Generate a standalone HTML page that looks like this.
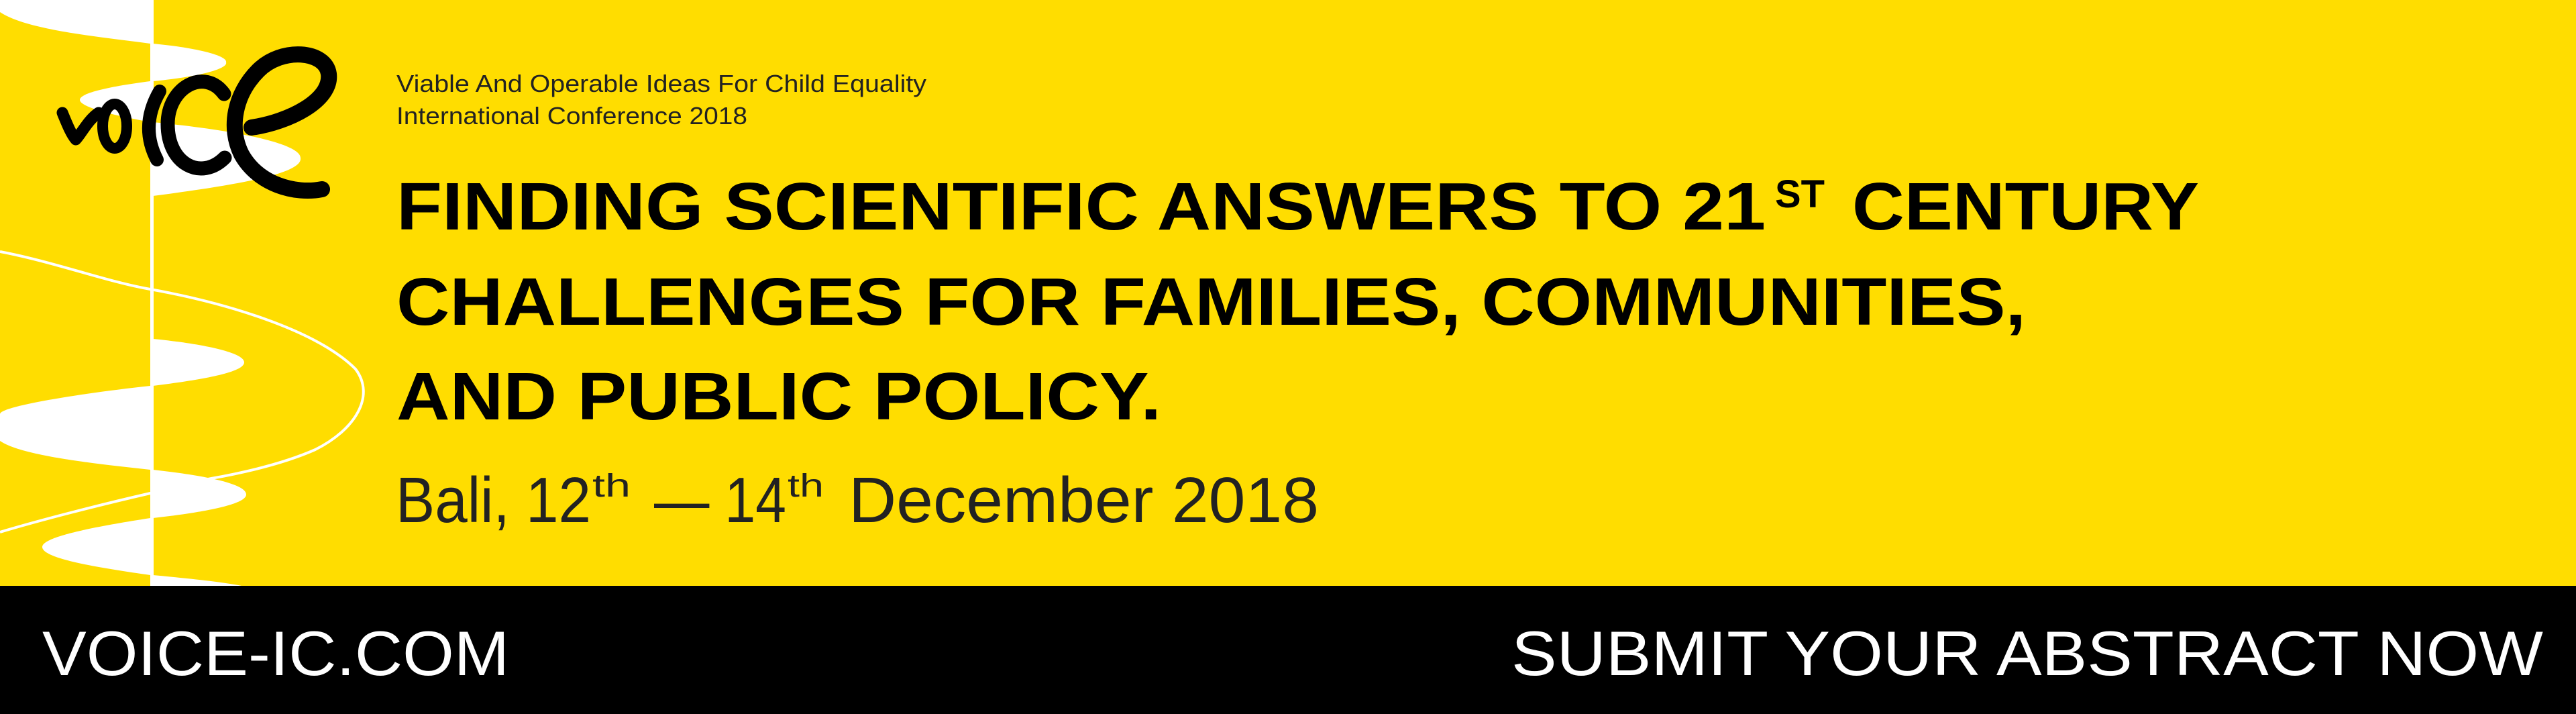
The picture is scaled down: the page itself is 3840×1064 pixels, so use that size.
<!DOCTYPE html>
<html><head><meta charset="utf-8"><style>
html,body{margin:0;padding:0;background:#FFDD00;}
svg{display:block;}
</style></head><body>
<svg width="3840" height="1064" viewBox="0 0 3840 1064" xmlns="http://www.w3.org/2000/svg">
<rect x="0" y="0" width="3840" height="1064" fill="#FFDD00"/>
<g fill="#fff">
<path d="M0 0 L224 0 L224 65 C150 55 40 45 0 18 Z"/>
<path d="M228 65 C300 72 340 84 337 93 C340 102 300 114 228 121 Z"/>
<path d="M224 121 C170 128 118 138 119 149 C120 160 170 172 224 182 Z"/>
<path d="M228 182 C360 195 450 215 448 236 C450 258 360 275 228 292 Z"/>
<path d="M228 505 C300 512 364 525 364 540 C364 555 300 566 228 575 Z"/>
<path d="M224 575 C130 585 0 605 0 617 L0 657 C30 678 130 690 224 700 Z"/>
<path d="M228 700 C300 708 367 720 367 737 C367 752 300 764 228 772 Z"/>
<path d="M224 772 C140 785 63 800 63 815 C63 832 140 845 224 857 Z"/>
<path d="M228 857 C280 862 330 867 360 873 L228 873 Z"/>
<rect x="224" y="0" width="5" height="873"/>
</g>
<path d="M0 375 C80 390 160 420 224 431 C330 450 470 490 530 550 C560 590 530 640 470 670 C420 692 360 705 315 713 C280 720 250 728 224 735 C150 752 60 775 0 793" fill="none" stroke="#fff" stroke-width="4"/>
<g fill="none" stroke="#000" stroke-linecap="round" stroke-linejoin="round">
<path d="M93 168 C100 185 106 200 113 208 C122 198 132 178 147 168" stroke-width="17"/>
<ellipse cx="171" cy="188" rx="18" ry="33" stroke-width="16"/>
<path d="M238 136 Q208 188 234 238" stroke-width="20"/>
<path d="M334 140 C305 100 250 130 250 185 C250 245 300 270 335 235" stroke-width="21"/>
<path d="M375 190 C430 182 495 150 490 110 C485 75 420 70 385 105 C350 140 340 190 360 230 C385 275 440 290 480 282" stroke-width="24"/>
</g>
<g font-family="Liberation Sans, sans-serif" fill="#222">
<text x="591" y="137" font-size="36" textLength="790" lengthAdjust="spacingAndGlyphs">Viable And Operable Ideas For Child Equality</text>
<text x="591" y="185" font-size="36" textLength="523" lengthAdjust="spacingAndGlyphs">International Conference 2018</text>
</g>
<g font-family="Liberation Sans, sans-serif" font-weight="bold" fill="#000">
<text x="591" y="342" font-size="100" textLength="2041" lengthAdjust="spacingAndGlyphs">FINDING SCIENTIFIC ANSWERS TO 21</text>
<text x="2646" y="309" font-size="58" textLength="74" lengthAdjust="spacingAndGlyphs">ST</text>
<text x="2761" y="342" font-size="100" textLength="517" lengthAdjust="spacingAndGlyphs">CENTURY</text>
<text x="591" y="484" font-size="100" textLength="2429" lengthAdjust="spacingAndGlyphs">CHALLENGES FOR FAMILIES, COMMUNITIES,</text>
<text x="591" y="625" font-size="100" textLength="1140" lengthAdjust="spacingAndGlyphs">AND PUBLIC POLICY.</text>
</g>
<g font-family="Liberation Sans, sans-serif" fill="#222">
<text x="590" y="778" font-size="96" textLength="291" lengthAdjust="spacingAndGlyphs">Bali, 12</text>
<text x="883" y="740" font-size="48" textLength="57" lengthAdjust="spacingAndGlyphs">th</text>
<text x="975" y="778" font-size="96" textLength="197" lengthAdjust="spacingAndGlyphs">— 14</text>
<text x="1174" y="740" font-size="48" textLength="54" lengthAdjust="spacingAndGlyphs">th</text>
<text x="1265" y="778" font-size="96" textLength="701" lengthAdjust="spacingAndGlyphs">December 2018</text>
</g>
<rect x="0" y="873" width="3840" height="191" fill="#000"/>
<g font-family="Liberation Sans, sans-serif" fill="#fff">
<text x="63" y="1006" font-size="94" textLength="696" lengthAdjust="spacingAndGlyphs">VOICE-IC.COM</text>
<text x="2253" y="1006" font-size="94" textLength="1538" lengthAdjust="spacingAndGlyphs">SUBMIT YOUR ABSTRACT NOW</text>
</g>
</svg>
</body></html>
